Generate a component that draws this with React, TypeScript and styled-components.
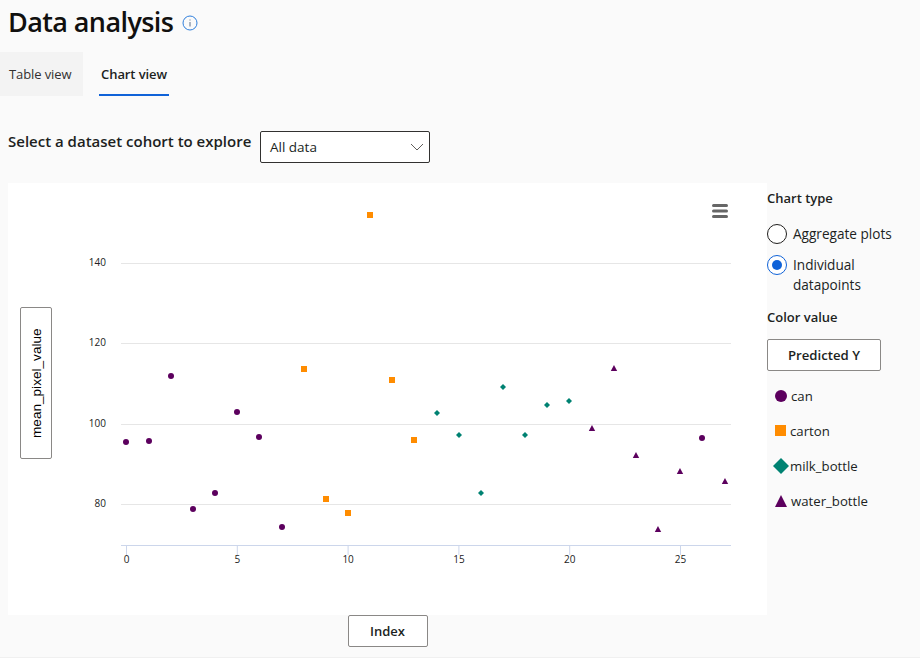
import styled, { createGlobalStyle } from "styled-components";

const GlobalStyle = createGlobalStyle`
  html, body {
    margin: 0;
    padding: 0;
    background: #faf9f8;
  }
  body {
    font-family: "Open Sans", "Noto Sans", sans-serif;
    color: #201f1e;
  }
`;

const Page = styled.div`
  width: 920px;
  height: 657px;
  border-bottom: 1px solid #f0f0f0;
  overflow: hidden;
  background: #fafafa;
`;

const Header = styled.div`
  display: flex;
  align-items: center;
  gap: 9px;
  height: 52px;
  padding: 0 0 10px 8px;
  box-sizing: border-box;
`;

const Title = styled.h1`
  margin: 0;
  font-size: 27px;
  font-weight: 600;
  color: #11100f;
  letter-spacing: -0.6px;
`;

const InfoSvg = styled.svg`
  display: block;
  margin-top: 4px;
`;

const TabBar = styled.div`
  display: flex;
  height: 44px;
`;

const Tab = styled.div<{ $active?: boolean }>`
  display: flex;
  align-items: center;
  box-sizing: border-box;
  height: 44px;
  font-size: 13px;
  letter-spacing: -0.1px;
  ${(p) =>
    p.$active
      ? `
    margin-left: 16px;
    padding-top: 2px;
    font-weight: 600;
    color: #201f1e;
    border-bottom: 2px solid #0f62d8;
    width: 70px;
    justify-content: center;
  `
      : `
    padding-left: 9px;
    width: 83px;
    background: #f3f3f3;
    color: #323130;
  `}
`;

const CohortRow = styled.div`
  display: flex;
  gap: 8px;
  height: 32px;
  margin: 35px 0 20px;
  padding-left: 8px;
`;

const CohortLabel = styled.label`
  width: 244px;
  font-size: 15px;
  font-weight: 600;
  line-height: 21px;
  white-space: nowrap;
`;

const Select = styled.div`
  display: flex;
  align-items: center;
  justify-content: space-between;
  box-sizing: border-box;
  width: 170px;
  height: 32px;
  padding: 0 5px 0 9px;
  background: #fff;
  border: 1px solid #323130;
  border-radius: 2px;
  font-size: 13.5px;
`;

const Body = styled.div`
  display: flex;
  padding-left: 8px;
`;

const ChartColumn = styled.div`
  display: flex;
  flex-direction: column;
  width: 759px;
`;

const ChartPanel = styled.div`
  display: flex;
  align-items: flex-start;
  height: 432px;
  padding-left: 12px;
  background: #fff;
`;

const AxisButton = styled.button<{ $vertical?: boolean }>`
  box-sizing: border-box;
  background: #fff;
  border: 1px solid #8a8886;
  border-radius: 2px;
  color: #201f1e;
  padding: 0;
  font-size: 14px;
  ${(p) =>
    p.$vertical
      ? `
    flex: none;
    width: 32px;
    height: 152px;
    margin-top: 124px;
    writing-mode: vertical-rl;
    transform: rotate(180deg);
    font-family: "Liberation Sans", Arial, sans-serif;
    font-size: 13.6px;
    color: #000;
  `
      : `
    width: 80px;
    height: 32px;
    align-self: center;
    font-weight: 600;
    font-size: 13px;
    font-family: "Open Sans", sans-serif;
  `}
`;

const Plot = styled.svg`
  display: block;
  flex: none;
`;

const Side = styled.div`
  display: flex;
  flex-direction: column;
  width: 153px;
`;

const SideHeading = styled.div`
  font-size: 13px;
  font-weight: 600;
  line-height: 18px;
`;

const ChartTypeHeading = styled(SideHeading)`
  margin: 6px 0 17px;
`;

const ColorHeading = styled(SideHeading)`
  margin: 2px 0 13px;
`;

const RadioRow = styled.div`
  display: flex;
  gap: 6px;
  margin-bottom: 11px;
  font-size: 13.6px;
  line-height: 20px;
  color: #201f1e;
`;

const RadioCircle = styled.span<{ $checked?: boolean }>`
  flex: none;
  display: flex;
  align-items: center;
  justify-content: center;
  box-sizing: border-box;
  width: 20px;
  height: 20px;
  border-radius: 50%;
  background: #fff;
  border: 1px solid ${(p) => (p.$checked ? "#0f62d8" : "#201f1e")};
  &::after {
    content: "";
    display: ${(p) => (p.$checked ? "block" : "none")};
    width: 10px;
    height: 10px;
    border-radius: 50%;
    background: #0f62d8;
  }
`;

const PredictedButton = styled.button`
  box-sizing: border-box;
  width: 114px;
  height: 32px;
  padding: 0;
  background: #fff;
  border: 1px solid #8a8886;
  border-radius: 2px;
  font-family: "Open Sans", sans-serif;
  font-size: 13.2px;
  font-weight: 600;
  color: #201f1e;
`;

const Legend = styled.ul`
  list-style: none;
  margin: 7px 0 0;
  padding: 0;
`;

const LegendItem = styled.li`
  display: flex;
  align-items: center;
  height: 35px;
  font-size: 13.2px;
  color: #201f1e;
`;

const LegendMark = styled.svg`
  display: block;
  flex: none;
`;

const PURPLE = "#5c005e";
const ORANGE = "#ff8c00";
const TEAL = "#008272";

// pixel positions are relative to the plot svg, which starts at x=52 y=183
const OX = 52;
const OY = 183;

const cans = [
  [126, 442], [149, 441], [171, 376], [193, 509], [215, 493],
  [237, 412], [259, 437], [282, 527], [702, 438],
];
const cartons = [
  [304, 369], [326, 499], [348, 513], [370, 215], [392, 380], [414, 440],
];
const milks = [
  [437, 413], [459, 435], [481, 493], [503, 387], [525, 435], [547, 405], [569, 401],
];
const waters = [
  [592, 428], [614, 368], [636, 455], [658, 529], [680, 471], [725, 481],
];

const yTicks = [
  { label: "140", y: 263 },
  { label: "120", y: 343 },
  { label: "100", y: 424 },
  { label: "80", y: 504 },
];
const xTicks = [0, 5, 10, 15, 20, 25];

function xPos(v: number) {
  return 126.5 + v * 22.16;
}

function ChartPlot() {
  return (
    <Plot width={715} height={432} viewBox={`${OX} ${OY} 715 432`}>
      {yTicks.map((t) => (
        <g key={t.label}>
          <line x1={121} x2={731} y1={t.y + 0.5} y2={t.y + 0.5} stroke="#e6e6e6" />
          <text x={106} y={t.y + 3} textAnchor="end" fontSize={10} fontFamily="'Open Sans', sans-serif" fill="#222">
            {t.label}
          </text>
        </g>
      ))}
      <line x1={121} x2={731} y1={545.5} y2={545.5} stroke="#ccd6eb" />
      {xTicks.map((v) => (
        <g key={v}>
          <line x1={xPos(v)} x2={xPos(v)} y1={546} y2={555} stroke="#ccd6eb" />
          <text x={xPos(v)} y={563} textAnchor="middle" fontSize={10} fontFamily="'Open Sans', sans-serif" fill="#222">
            {v}
          </text>
        </g>
      ))}
      {cans.map(([x, y]) => (
        <circle key={x} cx={x} cy={y} r={3} fill={PURPLE} />
      ))}
      {cartons.map(([x, y]) => (
        <rect key={x} x={x - 3} y={y - 3} width={6} height={6} fill={ORANGE} />
      ))}
      {milks.map(([x, y]) => (
        <path key={x} d={`M${x} ${y - 3}L${x + 3} ${y}L${x} ${y + 3}L${x - 3} ${y}Z`} fill={TEAL} />
      ))}
      {waters.map(([x, y]) => (
        <path key={x} d={`M${x} ${y - 3}L${x + 3.2} ${y + 3}L${x - 3.2} ${y + 3}Z`} fill={PURPLE} />
      ))}
      <g fill="#666">
        <rect x={712} y={204} width={16} height={3} rx={1.5} />
        <rect x={712} y={209.5} width={16} height={3} rx={1.5} />
        <rect x={712} y={215} width={16} height={3} rx={1.5} />
      </g>
    </Plot>
  );
}

function InfoIcon() {
  return (
    <InfoSvg width="16" height="16" viewBox="0 0 16 16" fill="none">
      <circle cx="8" cy="8" r="7" stroke="#2f7fdc" strokeWidth="1" />
      <rect x="7.5" y="7" width="1" height="4.5" fill="#5c6f88" />
      <rect x="7.5" y="4.5" width="1" height="1" fill="#5c6f88" />
    </InfoSvg>
  );
}

function Chevron() {
  return (
    <svg width="14" height="8" viewBox="0 0 14 8" fill="none">
      <path d="M1 1l6 6 6-6" stroke="#605e5c" strokeWidth="1" />
    </svg>
  );
}

const legendItems = [
  {
    name: "can",
    width: 24,
    mark: <circle cx="14" cy="8" r="6" fill={PURPLE} />,
  },
  {
    name: "carton",
    width: 23,
    mark: <rect x="8" y="2" width="11" height="11" fill={ORANGE} />,
  },
  {
    name: "milk_bottle",
    width: 23,
    mark: <path d="M14 0l8 8-8 8-8-8z" fill={TEAL} />,
  },
  {
    name: "water_bottle",
    width: 24,
    mark: <path d="M14 2l6 12H8z" fill={PURPLE} />,
  },
];

export default function App() {
  return (
    <Page>
      <GlobalStyle />
      <Header>
        <Title>Data analysis</Title>
        <InfoIcon />
      </Header>
      <TabBar>
        <Tab>Table view</Tab>
        <Tab $active>Chart view</Tab>
      </TabBar>
      <CohortRow>
        <CohortLabel>Select a dataset cohort to explore</CohortLabel>
        <Select>
          All data
          <Chevron />
        </Select>
      </CohortRow>
      <Body>
        <ChartColumn>
          <ChartPanel>
            <AxisButton $vertical>mean_pixel_value</AxisButton>
            <ChartPlot />
          </ChartPanel>
          <AxisButton>Index</AxisButton>
        </ChartColumn>
        <Side>
          <ChartTypeHeading>Chart type</ChartTypeHeading>
          <RadioRow>
            <RadioCircle />
            Aggregate plots
          </RadioRow>
          <RadioRow>
            <RadioCircle $checked />
            <span>
              Individual
              <br />
              datapoints
            </span>
          </RadioRow>
          <ColorHeading>Color value</ColorHeading>
          <PredictedButton>Predicted Y</PredictedButton>
          <Legend>
            {legendItems.map((item) => (
              <LegendItem key={item.name}>
                <LegendMark width={item.width} height={16} viewBox={`0 0 ${item.width} 16`}>
                  {item.mark}
                </LegendMark>
                {item.name}
              </LegendItem>
            ))}
          </Legend>
        </Side>
      </Body>
    </Page>
  );
}
